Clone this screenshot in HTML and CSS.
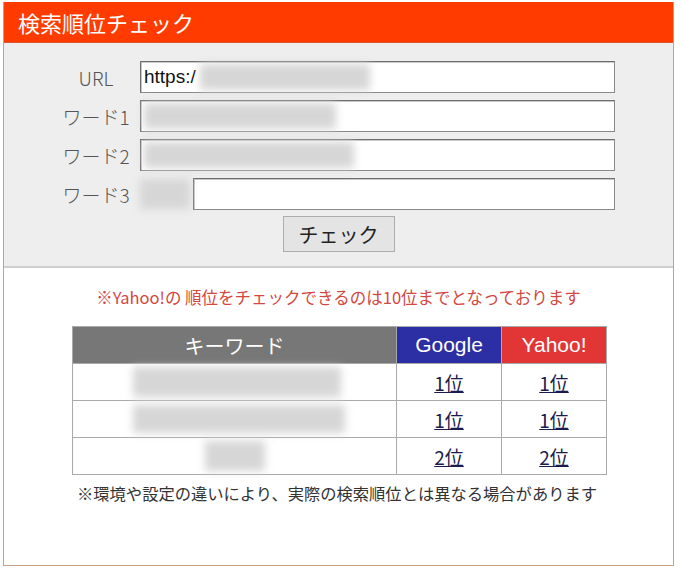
FILE: index.html
```html
<!DOCTYPE html>
<html lang="ja">
<head>
<meta charset="utf-8">
<title>検索順位チェック</title>
<link rel="stylesheet" href="styles.css">
</head>
<body>
<div class="panel">
  <div class="title">検索順位チェック</div>
  <form class="form">
    <div class="row">
      <span class="label">URL</span>
      <div class="field"><span class="val">https:/</span><span class="redact r-url"></span></div>
    </div>
    <div class="row">
      <span class="label">ワード1</span>
      <div class="field"><span class="redact r-w1"></span></div>
    </div>
    <div class="row">
      <span class="label">ワード2</span>
      <div class="field"><span class="redact r-w2"></span></div>
    </div>
    <div class="row">
      <span class="label">ワード3</span>
      <span class="redact r-w3"></span>
      <div class="field"></div>
    </div>
    <div class="actions">
      <button type="button" class="btn">チェック</button>
    </div>
  </form>
  <div class="result">
    <p class="note">※Yahoo!の 順位をチェックできるのは10位までとなっております</p>
    <table class="rank">
      <thead>
        <tr>
          <th class="h-kw">キーワード</th>
          <th class="h-g">Google</th>
          <th class="h-y">Yahoo!</th>
        </tr>
      </thead>
      <tbody>
        <tr>
          <td class="kw"><span class="redact r-k1"></span></td>
          <td><a href="#">1位</a></td>
          <td><a href="#">1位</a></td>
        </tr>
        <tr>
          <td class="kw"><span class="redact r-k2"></span></td>
          <td><a href="#">1位</a></td>
          <td><a href="#">1位</a></td>
        </tr>
        <tr>
          <td class="kw"><span class="redact r-k3"></span></td>
          <td><a href="#">2位</a></td>
          <td><a href="#">2位</a></td>
        </tr>
      </tbody>
    </table>
    <p class="foot">※環境や設定の違いにより、実際の検索順位とは異なる場合があります</p>
  </div>
</div>
</body>
</html>
```

FILE: styles.css
```css
body {
  margin: 0;
  background: #fff;
  font-family: "Noto Sans CJK JP", "Noto Sans", sans-serif;
}

.panel {
  box-sizing: border-box;
  width: 671px;
  height: 564px;
  margin: 2px 0 0 3px;
  border: 1px solid #c99f86;
  border-top: 0;
  background: #fff;
}

.title {
  height: 40px;
  line-height: 40px;
  padding-left: 14px;
  background: #ff3b00;
  border-bottom: 1px solid #e0552a;
  color: #fff;
  font-size: 22px;
}

.form {
  margin: 0;
  padding: 18px 0 14px;
  background: #eeeeee;
  border-bottom: 2px solid #cfcfcf;
}

.row {
  display: flex;
  align-items: center;
  height: 32px;
  margin-bottom: 7px;
}

.label {
  width: 80px;
  margin-left: 52px;
  margin-right: 4px;
  text-align: center;
  font-size: 19px;
  color: #555;
  font-weight: 300;
}

.field {
  box-sizing: border-box;
  flex: 1;
  height: 32px;
  margin-right: 58px;
  display: flex;
  align-items: center;
  padding-left: 3px;
  background: #fff;
  border: 1px solid #8a8a8a;
  border-top-color: #6f6f6f;
  border-left-color: #6f6f6f;
  box-shadow: inset 1px 1px 0 #c8c8c8;
}

.val {
  font-family: "Liberation Sans", Arial, sans-serif;
  font-size: 19px;
  color: #111;
}

.redact {
  display: inline-block;
  background: #d6d6d6;
  filter: blur(4px);
}

.r-url { width: 170px; height: 26px; margin-left: 4px; }
.r-w1 { width: 192px; height: 26px; }
.r-w2 { width: 210px; height: 26px; }
.r-w3 { width: 50px; height: 30px; margin-right: 3px; }

.actions {
  display: flex;
  justify-content: center;
}

.btn {
  width: 112px;
  height: 36px;
  margin-top: -1px;
  background: #e4e4e4;
  border: 1px solid #adadad;
  border-radius: 0;
  font-family: "Noto Sans CJK JP", sans-serif;
  font-size: 20px;
  color: #222;
  padding: 0;
}

.result {
  padding-top: 18px;
}

.note {
  margin: 0;
  text-align: center;
  font-size: 16.5px;
  line-height: 22px;
  color: #d3473f;
}

.rank {
  width: 535px;
  margin: 18px 0 0 68px;
  border-collapse: collapse;
  font-family: "Noto Sans CJK JP", sans-serif;
}

.rank th {
  height: 36px;
  padding: 0;
  color: #fff;
  font-weight: normal;
  font-size: 20px;
  border: 1px solid #aaa;
}

.rank .h-g,
.rank .h-y {
  font-family: "Liberation Sans", Arial, sans-serif;
  font-size: 21px;
}

.h-kw { width: 323px; background: #777; }
.h-g { width: 104px; background: #2c2ea3; }
.h-y { background: #e23636; }

.rank td {
  height: 36px;
  padding: 0;
  text-align: center;
  border: 1px solid #aaa;
}

.rank a {
  color: #1b1b4d;
  font-size: 19px;
  text-decoration: underline;
}

.kw { vertical-align: middle; }
.r-k1 { width: 208px; height: 30px; display: block; margin-left: 60px; }
.r-k2 { width: 212px; height: 28px; display: block; margin-left: 60px; }
.r-k3 { width: 60px; height: 30px; display: block; margin-left: 132px; }

.foot {
  margin: 7px 0 0 73px;
  font-size: 16.3px;
  line-height: 22px;
  color: #333;
}
```
